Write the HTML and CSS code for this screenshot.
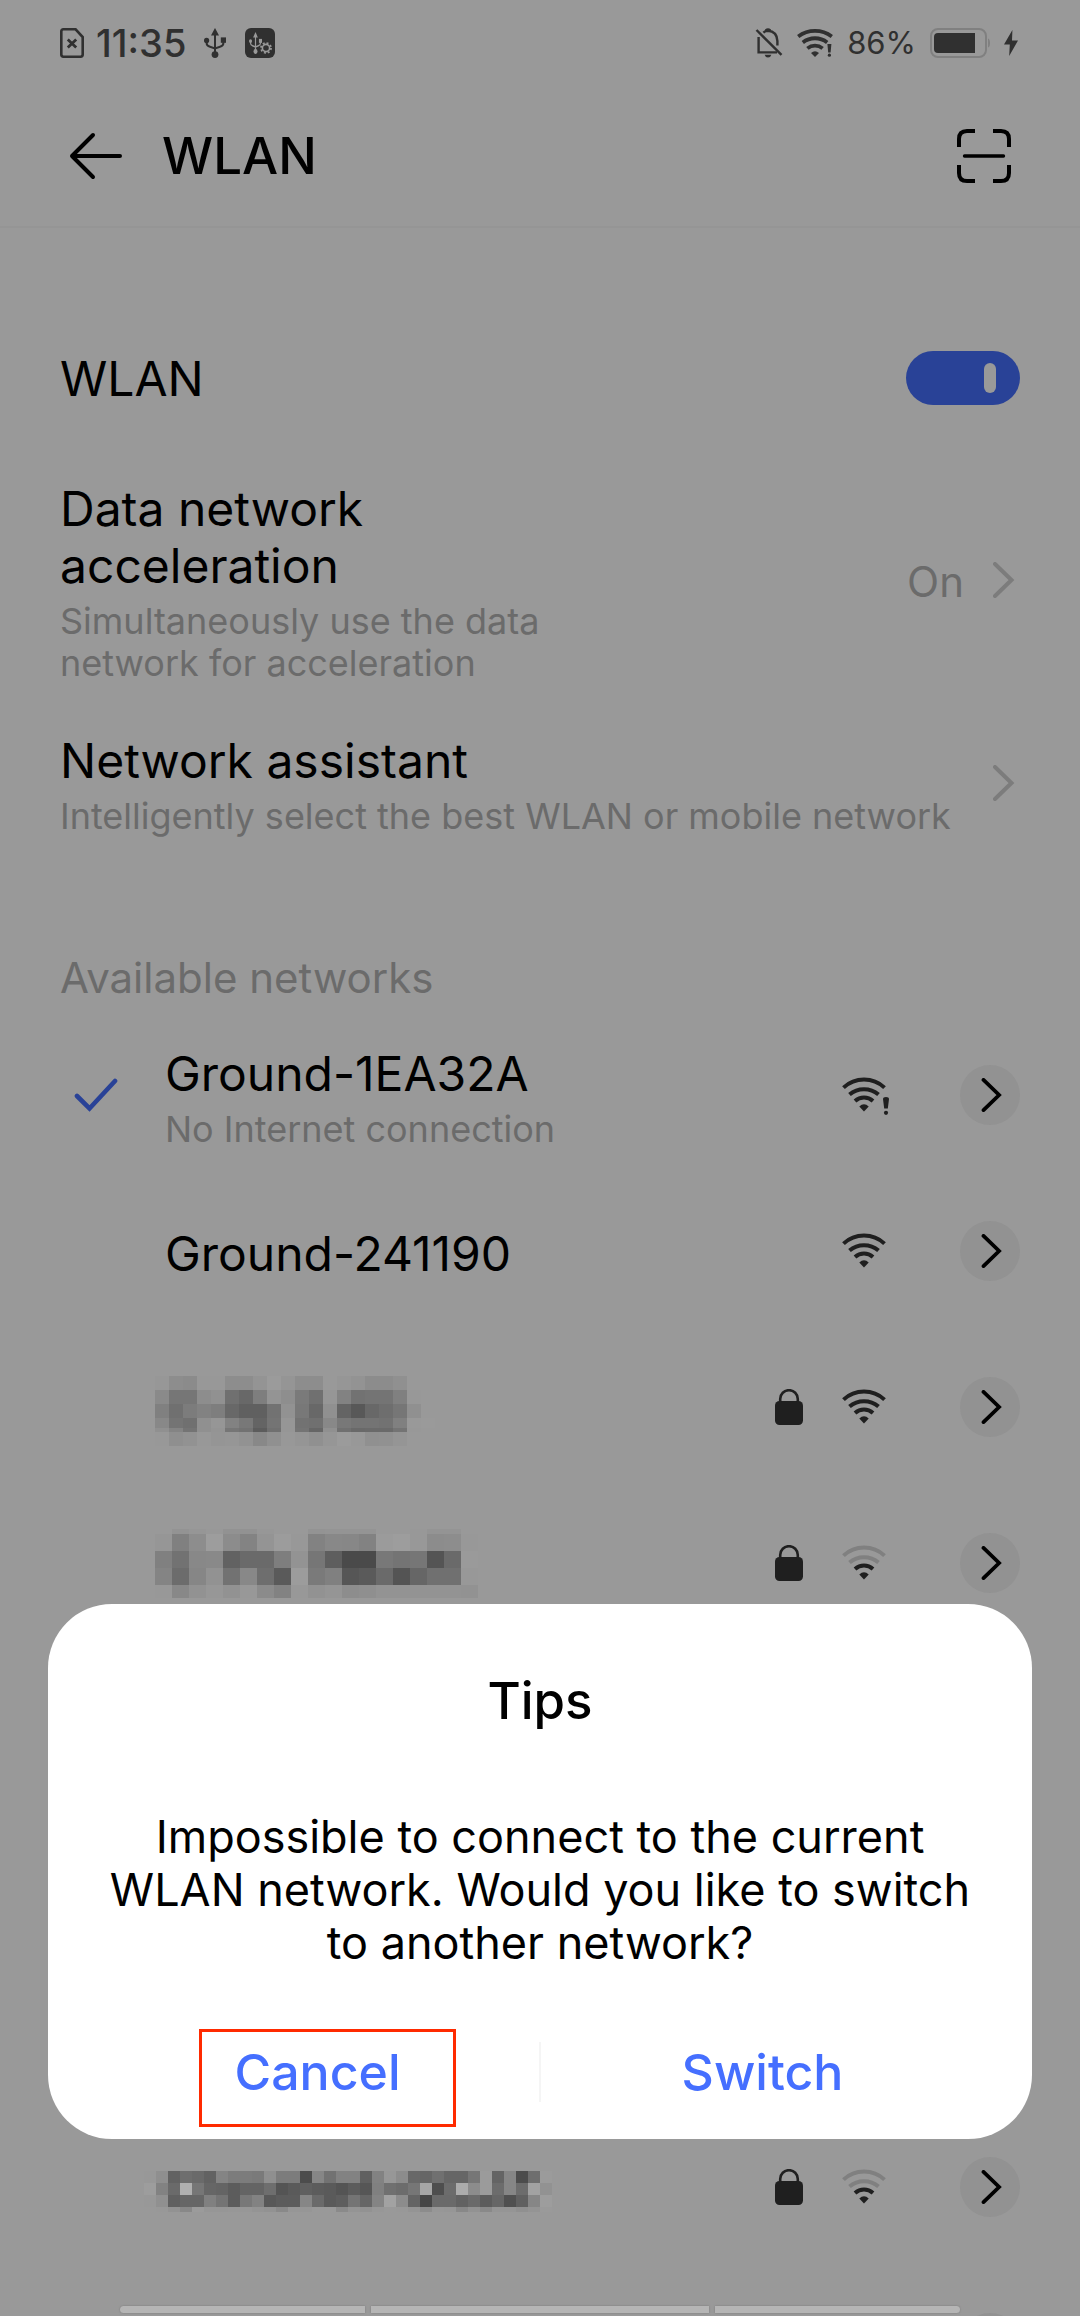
FILE: index.html
```html
<!DOCTYPE html>
<html lang="en">
<head>
<meta charset="utf-8">
<meta name="viewport" content="width=device-width, initial-scale=1">
<title>WLAN</title>
<link rel="stylesheet" href="styles.css">
</head>
<body>
<svg class="sprite" aria-hidden="true">
  <symbol id="bars-full" viewBox="0 0 44 36">
    <g fill="none" stroke="currentColor" stroke-width="4">
      <path d="M1.5 10.6A30 30 0 0 1 42.5 10.6"/>
      <path d="M7.5 17.6A22 22 0 0 1 36.5 17.6"/>
      <path d="M13 24A13.5 13.5 0 0 1 31 24"/>
    </g>
    <path fill="currentColor" d="M17.3 29.4Q22 25 26.7 29.4L22 34.6Z"/>
  </symbol>
  <symbol id="bars-low" viewBox="0 0 44 36">
    <g fill="none" stroke="#808080" stroke-width="4">
      <path d="M1.5 10.6A30 30 0 0 1 42.5 10.6"/>
      <path d="M7.5 17.6A22 22 0 0 1 36.5 17.6"/>
    </g>
    <path fill="none" stroke="currentColor" stroke-width="4" d="M13 24A13.5 13.5 0 0 1 31 24"/>
    <path fill="currentColor" d="M17.3 29.4Q22 25 26.7 29.4L22 34.6Z"/>
  </symbol>
  <symbol id="lock" viewBox="0 0 28 36">
    <rect y="12" width="28" height="24" rx="4.5" fill="currentColor"/>
    <path d="M5.2 14V10A8.8 8.8 0 0 1 22.8 10V14" fill="none" stroke="currentColor" stroke-width="2.6"/>
  </symbol>
  <symbol id="chevron" viewBox="0 0 22 36">
    <path d="M2 2L18.5 18L2 34" fill="none" stroke="currentColor" stroke-width="4" stroke-linecap="round"/>
  </symbol>
  <symbol id="usb" viewBox="0 0 22 30">
    <path d="M11 0L15 7.5H7Z" fill="currentColor"/>
    <circle cx="11" cy="26.6" r="3.4" fill="currentColor"/>
    <circle cx="2.6" cy="12.4" r="2.6" fill="currentColor"/>
    <rect x="16.8" y="9.4" width="5.2" height="5.4" fill="currentColor"/>
    <path d="M11 6V25M2.6 12V15Q2.6 18 6 18.8L11 20.4L16 18.8Q19.4 18 19.4 15V12" fill="none" stroke="currentColor" stroke-width="2"/>
  </symbol>
</svg>

<div class="screen">
  <div class="status">
    <div class="status-group">
      <svg width="24" height="30" viewBox="0 0 24 30"><path d="M3.4 1.3H15.6L22.7 9V26.6Q22.7 28.7 20.6 28.7H3.4Q1.3 28.7 1.3 26.6V3.4Q1.3 1.3 3.4 1.3Z" fill="none" stroke="currentColor" stroke-width="2.6"/><path d="M7.8 11.6L16.2 19.6M16.2 11.6L7.8 19.6" stroke="currentColor" stroke-width="2.8"/></svg>
      <span class="clock">11:35</span>
      <svg class="usb" width="22" height="30"><use href="#usb"/></svg>
      <svg width="30" height="30" viewBox="0 0 30 30"><rect width="30" height="30" rx="6" fill="currentColor"/><g color="#999"><svg x="4" y="4" width="13" height="22" viewBox="0 0 22 30" preserveAspectRatio="none"><use href="#usb" width="22" height="30"/></svg><circle cx="21" cy="20" r="3.6" fill="none" stroke="currentColor" stroke-width="1.6"/><circle cx="21" cy="20" r="5" fill="none" stroke="currentColor" stroke-width="1.8" stroke-dasharray="1.96 1.96"/></g></svg>
    </div>
    <div class="status-group status-right">
      <svg width="28" height="30" viewBox="0 0 28 30"><g fill="none" stroke="currentColor" stroke-width="2.4"><path d="M1.5 2L26.5 26.8"/><path d="M3.6 9V24.4H22M8.4 4.6Q10.4 2.8 13 2.8Q22 3.6 22.4 13V17.4"/></g><path d="M10 1.4Q13 -1 16 1.4V4H10ZM9.6 26.8H16.4Q15.6 29.6 13 29.6Q10.4 29.6 9.6 26.8Z" fill="currentColor"/></svg>
      <svg width="36" height="30" viewBox="0 0 36 30"><g fill="none" stroke="currentColor" stroke-width="3.8"><path d="M1.2 8.4A28 28 0 0 1 34.8 8.4"/><path d="M5.8 14.4A20 20 0 0 1 30.2 14.4"/><path d="M10.4 20.4A12 12 0 0 1 25.6 20.4"/></g><path d="M14 25Q18 21.400 22 25L18 29Z" fill="currentColor"/><path d="M30.4 16H34.4L33.6 24.6H31.2Z" fill="currentColor"/><circle cx="32.4" cy="27.2" r="1.6" fill="currentColor"/></svg>
      <span class="percent">86%</span>
      <svg width="60" height="30" viewBox="0 0 60 30"><rect x="1" y="1" width="55" height="28" rx="7" fill="none" stroke="#808080" stroke-width="2"/><path d="M8 5H45V25H8Q4 25 4 21V9Q4 5 8 5Z" fill="currentColor"/><path d="M58 10.500Q60 11 60 15Q60 19 58 19.500Z" fill="#808080"/></svg>
      <svg width="14" height="28" viewBox="0 0 14 28"><path d="M8.400 1L0 15.600H5.800L5.200 27L14 11.600H8Z" fill="currentColor"/></svg>
    </div>
  </div>

  <header class="topbar">
    <button class="icon-button" aria-label="Back"><svg width="54" height="48" viewBox="0 0 54 48"><path d="M24 3L3 24L24 45M3 24H51" fill="none" stroke="currentColor" stroke-width="4" stroke-linecap="round" stroke-linejoin="round"/></svg></button>
    <h1>WLAN</h1>
    <button class="icon-button scan" aria-label="Scan"><svg width="54" height="54" viewBox="0 0 54 54"><g fill="none" stroke="currentColor" stroke-width="4"><path d="M2 18V10Q2 2 10 2H18M36 2H44Q52 2 52 10V18M52 36V44Q52 52 44 52H36M18 52H10Q2 52 2 44V36"/><path d="M7.500 27H46.500" stroke-width="3.400" stroke-linecap="round"/></g></svg></button>
  </header>

  <main>
    <div class="row row-switch">
      <label class="title" for="wlan">WLAN</label>
      <input class="switch" id="wlan" type="checkbox" role="switch" checked>
    </div>
    <a class="row row-accel" href="#acceleration">
      <span class="text narrow"><span class="title">Data network acceleration</span><span class="sub">Simultaneously use the data network for acceleration</span></span>
      <span class="value">On</span>
      <svg class="more" width="22" height="36"><use href="#chevron"/></svg>
    </a>
    <a class="row row-assist" href="#assistant">
      <span class="text"><span class="title">Network assistant</span><span class="sub">Intelligently select the best WLAN or mobile network</span></span>
      <svg class="more" width="22" height="36"><use href="#chevron"/></svg>
    </a>

    <h2>Available networks</h2>
    <ul class="networks">
      <li class="network">
        <svg class="check" width="44" height="34" viewBox="0 0 44 34"><path d="M3 18L15.500 30.500L41 3" fill="none" stroke="currentColor" stroke-width="4.600" stroke-linecap="round"/></svg>
        <span class="name"><span class="title">Ground-1EA32A</span><span class="sub">No Internet connection</span></span>
        <span class="signal"><svg width="44" height="36"><use href="#bars-full"/></svg><svg class="alert" width="6" height="18" viewBox="0 0 6 18"><path d="M0 2Q0 0 3 0Q6 0 6 2L4.800 11.500H1.200Z" fill="currentColor"/><circle cx="3" cy="15.800" r="2.100" fill="currentColor"/></svg></span>
        <button class="details" aria-label="Details"><svg width="22" height="34"><use href="#chevron"/></svg></button>
      </li>
      <li class="network">
        <span class="name"><span class="title">Ground-241190</span></span>
        <span class="signal"><svg width="44" height="36"><use href="#bars-full"/></svg></span>
        <button class="details" aria-label="Details"><svg width="22" height="34"><use href="#chevron"/></svg></button>
      </li>
      <li class="network">
        <svg class="masked masked-a" data-mask="a"></svg>
        <svg class="lock" width="28" height="36"><use href="#lock"/></svg>
        <span class="signal"><svg width="44" height="36"><use href="#bars-full"/></svg></span>
        <button class="details" aria-label="Details"><svg width="22" height="34"><use href="#chevron"/></svg></button>
      </li>
      <li class="network">
        <svg class="masked masked-b" data-mask="b"></svg>
        <svg class="lock" width="28" height="36"><use href="#lock"/></svg>
        <span class="signal"><svg width="44" height="36"><use href="#bars-low"/></svg></span>
        <button class="details" aria-label="Details"><svg width="22" height="34"><use href="#chevron"/></svg></button>
      </li>
      <li class="network"></li>
      <li class="network"></li>
      <li class="network"></li>
      <li class="network">
        <svg class="masked masked-c" data-mask="c"></svg>
        <svg class="lock" width="28" height="36"><use href="#lock"/></svg>
        <span class="signal"><svg width="44" height="36"><use href="#bars-low"/></svg></span>
        <button class="details" aria-label="Details"><svg width="22" height="34"><use href="#chevron"/></svg></button>
      </li>
      <li class="network">
        <button class="details" aria-label="Details"><svg width="22" height="34"><use href="#chevron"/></svg></button>
      </li>
    </ul>
  </main>

  <section class="dialog" role="dialog" aria-labelledby="tips">
    <h2 id="tips">Tips</h2>
    <p>Impossible to connect to the current WLAN network. Would you like to switch to another network?</p>
    <div class="actions">
      <button class="action marked">Cancel</button>
      <span class="divider"></span>
      <button class="action">Switch</button>
    </div>
  </section>

  <div class="navbar"><span></span><span class="wide"></span><span></span></div>
</div>
<script src="masks.js"></script>
</body>
</html>
```
FILE: styles.css
```css
*, *::before, *::after { box-sizing: border-box; }
body { margin: 0; background: #999; color: #000; font-family: Inter, "Liberation Sans", sans-serif; }
button { margin: 0; padding: 0; border: 0; background: none; color: inherit; font: inherit; }
a { color: inherit; text-decoration: none; }
h1, h2, p, ul { margin: 0; padding: 0; font-weight: 400; }
svg { display: block; flex: none; }
.sprite { position: absolute; width: 0; height: 0; }
.screen { position: relative; height: 100vh; overflow: hidden; }

.status { display: flex; justify-content: space-between; align-items: center; height: 86px; padding: 0 62px 0 60px; color: #303030; }
.status-group { display: flex; align-items: center; }
.clock { margin-left: 12px; font-size: 38px; line-height: 40px; font-weight: 500; }
.usb { margin: 0 19px 0 18px; }
.status-right { gap: 14px; }
.percent { font-size: 31px; line-height: 40px; }

.topbar { display: flex; align-items: center; height: 142px; padding: 0 69px; border-bottom: 2px solid #959595; }
.topbar h1 { margin-left: 39px; font-size: 51px; line-height: 60px; font-weight: 500; }
.scan { margin-left: auto; }

main { padding: 72px 60px 0; }
.row { display: flex; align-items: center; }
.row-switch { height: 156px; justify-content: space-between; }
.row-accel { padding: 24px 0 20px; }
.row-assist { padding: 28px 0 22px; }
.title { display: block; font-size: 48px; line-height: 57px; }
.sub { display: block; margin-top: 6px; font-size: 36px; line-height: 42px; color: #6b6b6b; }
.text { flex: 1; }
.narrow { max-width: 500px; margin-right: auto; }
.narrow .title { max-width: 400px; }
.value { margin-right: 29px; font-size: 42px; line-height: 50px; color: #6b6b6b; }
.more { margin: 0 5px 4px 0; color: #7c7c7c; }
.switch { appearance: none; display: flex; justify-content: flex-end; align-items: center; width: 114px; height: 54px; margin: 0; padding-right: 24px; border-radius: 27px; background: #294297; }
.switch::after { content: ""; width: 12px; height: 30px; border-radius: 6px; background: #999; }

main h2 { margin: 94px 0 14px; font-size: 42px; line-height: 50px; color: #6b6b6b; }
.networks { list-style: none; }
.network { position: relative; display: flex; align-items: center; justify-content: flex-end; height: 156px; }
.check { margin-left: 14px; color: #294297; }
.name { margin-right: auto; padding: 4px 0 0 105px; }
.check + .name { padding-left: 47px; }
.lock, .signal { color: #1f1f1f; }
.lock { margin-right: 39px; }
.signal { position: relative; margin-right: 74px; }
.alert { position: absolute; right: -3px; top: 20px; }
.details { display: flex; align-items: center; justify-content: center; width: 60px; height: 60px; padding-left: 4px; border-radius: 50%; background: #929292; }
.masked { margin-right: auto; }
.masked-a { margin: 8px auto 0 81px; }
.masked-b { margin-left: 78px; }
.masked-c { margin: 8px auto 0 84px; }

.dialog { position: absolute; left: 48px; right: 48px; bottom: 177px; padding: 66px 48px 0; border-radius: 64px; background: #fff; text-align: center; }
.dialog h2 { font-size: 51px; line-height: 62px; font-weight: 500; }
.dialog p { margin: 78px 0 36px; font-size: 45px; line-height: 53px; }
.actions { display: flex; align-items: center; height: 134px; }
.action { position: relative; flex: 1; height: 134px; color: #456fff; font-size: 50px; line-height: 60px; font-weight: 500; }
.marked::after { content: ""; position: absolute; left: 103px; top: 24px; width: 257px; height: 98px; border: 3px solid #ff2a00; }
.divider { width: 2px; height: 60px; background: #f5f5f5; }

.navbar { position: absolute; left: 120px; right: 120px; bottom: 3px; display: flex; gap: 6px; }
.navbar span { flex: 245; height: 7px; background: #b5b5b5; box-shadow: 0 0 2px #777; }
.navbar .wide { flex: 338; }
.navbar span:first-child { border-radius: 4px 0 0 4px; }
.navbar span:last-child { border-radius: 0 4px 4px 0; }
```
FILE: masks.js
```js
// Masked network names: each mask is a grid of grey levels, two hex digits per cell.
const masks = {
  a: { cell: 14, heights: [14, 14, 14, 10, 4, 14], rows: [
    "99978d8b98988d8d949b958d8d9996938c8c909999",
    "998a76768d9170687e948e7a709682727474809899",
    "9980707c827e68606072927868906458686e769099",
    "99887470909682786474967270887874747280999a",
    "99908474909476725c709674669070696a6a749899",
    "99988f92989596928890989590969b989091959999"] },
  b: { cell: 17, heights: [5, 17, 17, 17, 13], rows: [
    "9999939698929297999993949494999998949499",
    "9996808d9d8c83949c98828887829b9d988c8d98",
    "9980728889626a6a7e93765e4a4a787476546a9a",
    "99846c869272886e5a9c7a80565a6a5466707098",
    "999888929792988b829892958d8f939393939392"] },
  c: { cell: 12, heights: [12, 12, 12, 5], rows: [
    "988f626e6a62847c7c7a8f7c7c4c86728282608297" + "8c6866706666769b64864c6e9b",
    "9d826ab07666645c64646e545a605c5a545c568070" + "6c76a64e6cac8c9b6c866ca292",
    "989060666680745c7882585c5c866a5a5e746684a2" + "8c64466a6a626a5c665060869d",
    "999892889b96969797949289969699998a94929799" + "98948c9796889289959590949a"] }
};

for (const svg of document.querySelectorAll("[data-mask]")) {
  const { cell, heights, rows } = masks[svg.dataset.mask];
  let y = 0;
  rows.forEach((row, r) => {
    for (let c = 0; c < row.length / 2; c++) {
      const v = row.slice(c * 2, c * 2 + 2);
      const rect = document.createElementNS("http://www.w3.org/2000/svg", "rect");
      rect.setAttribute("x", c * cell);
      rect.setAttribute("y", y);
      rect.setAttribute("width", cell);
      rect.setAttribute("height", heights[r]);
      rect.setAttribute("fill", "#" + v + v + v);
      svg.appendChild(rect);
    }
    y += heights[r];
  });
  svg.setAttribute("width", rows[0].length / 2 * cell);
  svg.setAttribute("height", y);
}
```
